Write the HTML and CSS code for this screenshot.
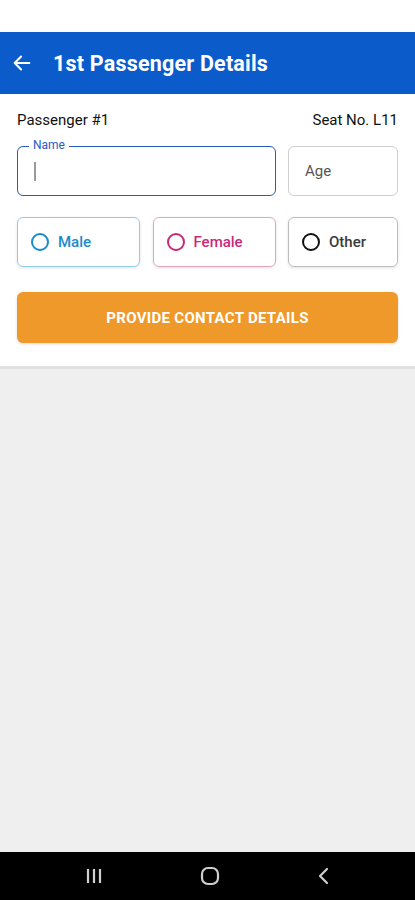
FILE: index.html
```html
<!DOCTYPE html>
<html lang="en">
<head>
  <meta charset="UTF-8" />
  <meta name="viewport" content="width=device-width, initial-scale=1.0" />
  <title>1st Passenger Details</title>
  <link rel="stylesheet" href="styles.css">
</head>
<body>

  <div class="status-bar"></div>

  <!-- App Bar -->
  <header class="app-bar">
    <svg class="back-icon" width="22" height="22" viewBox="0 0 24 24">
      <path d="M20 12H5M11 5l-7 7 7 7" fill="none" stroke="#fff" stroke-width="2.2" stroke-linecap="round" stroke-linejoin="round"/>
    </svg>
    <h1>1st Passenger Details</h1>
  </header>

  <!-- Passenger Card -->
  <section class="card">
    <div class="card-head">
      <span>Passenger #1</span>
      <span>Seat No. L11</span>
    </div>

    <div class="grid">
      <div class="field field-name">
        <span class="field-label">Name</span>
        <span class="cursor"></span>
      </div>
      <div class="field field-age">Age</div>
    </div>

    <div class="grid gender-row">
      <div class="gender male"><span class="radio"></span>Male</div>
      <div class="gender female"><span class="radio"></span>Female</div>
      <div class="gender other"><span class="radio"></span>Other</div>
    </div>

    <button class="contact-btn">Provide Contact Details</button>
  </section>

  <div class="filler"></div>

  <!-- Navigation Bar -->
  <nav class="nav-bar">
    <svg width="18" height="18" viewBox="0 0 18 18">
      <path d="M3 2v14M9 2v14M15 2v14" stroke="#cfcfcf" stroke-width="2.2"/>
    </svg>
    <svg width="20" height="20" viewBox="0 0 20 20">
      <rect x="2" y="2" width="16" height="16" rx="6" fill="none" stroke="#cfcfcf" stroke-width="2.2"/>
    </svg>
    <svg width="14" height="20" viewBox="0 0 14 20">
      <path d="M10 3L3 10l7 7" fill="none" stroke="#cfcfcf" stroke-width="2.2" stroke-linecap="round" stroke-linejoin="round"/>
    </svg>
  </nav>

</body>
</html>
```

FILE: styles.css
```css
body {
  margin: 0;
  height: 900px;
  display: flex;
  flex-direction: column;
  font-family: 'Roboto', 'Liberation Sans', sans-serif;
  background: #efefef;
  overflow: hidden;
}
.status-bar {
  height: 32px;
  background: #fff;
}
/* App Bar */
.app-bar {
  height: 62px;
  background: #0c5bcb;
  display: flex;
  align-items: center;
  padding-left: 11px;
  gap: 20px;
}
.app-bar h1 {
  margin: 0;
  color: #fff;
  font-size: 21.5px;
  font-weight: 700;
  letter-spacing: 0.2px;
}
/* Card */
.card {
  background: #fff;
  padding: 18px 17px 23px;
  border-bottom: 3px solid #e2e2e2;
}
.card-head {
  display: flex;
  justify-content: space-between;
  font-size: 15px;
  line-height: 16px;
  color: #111;
}
.grid {
  display: grid;
  grid-template-columns: 1fr 1fr 110px;
  column-gap: 12.5px;
  margin-top: 18px;
}
.field {
  height: 50px;
  box-sizing: border-box;
  border-radius: 6px;
  position: relative;
  display: flex;
  align-items: center;
}
.field-name {
  grid-column: span 2;
  border: 1.5px solid #2a5bc2;
  padding-left: 16px;
}
.field-label {
  position: absolute;
  top: -9px;
  left: 11px;
  padding: 0 4px;
  background: #fff;
  color: #2a5bc2;
  font-size: 12px;
  line-height: 14px;
}
.cursor {
  width: 2px;
  height: 19px;
  background: #9a9a9a;
}
.field-age {
  border: 1px solid #cfcfcf;
  padding-left: 16px;
  font-size: 15px;
  color: #555;
}
/* Gender */
.gender-row {
  margin-top: 21px;
}
.gender {
  height: 50px;
  box-sizing: border-box;
  border-radius: 6px;
  display: flex;
  align-items: center;
  gap: 9px;
  padding-left: 13px;
  font-size: 15px;
  font-weight: 500;
  box-shadow: 0 1px 3px rgba(0, 0, 0, 0.12);
}
.radio {
  width: 18px;
  height: 18px;
  box-sizing: border-box;
  border-radius: 50%;
  border: 2px solid currentColor;
}
.male {
  border: 1px solid #96cbe6;
  color: #1a8bcb;
}
.female {
  border: 1px solid #e3a6c0;
  color: #c9287a;
}
.other {
  border: 1px solid #bdbdbd;
  color: #3a3a3a;
}
.other .radio {
  border-color: #111;
}
/* Contact Button */
.contact-btn {
  display: block;
  width: 100%;
  height: 51px;
  margin-top: 25px;
  border: none;
  border-radius: 6px;
  background: #ef992a;
  color: #fff;
  font-family: inherit;
  font-size: 15px;
  font-weight: 700;
  letter-spacing: 0.3px;
  text-transform: uppercase;
  box-shadow: 0 1px 3px rgba(0, 0, 0, 0.15);
}
.filler {
  flex: 1;
}
/* Navigation Bar */
.nav-bar {
  height: 48px;
  background: #000;
  display: flex;
  align-items: center;
  justify-content: center;
  gap: 97px;
}
```
